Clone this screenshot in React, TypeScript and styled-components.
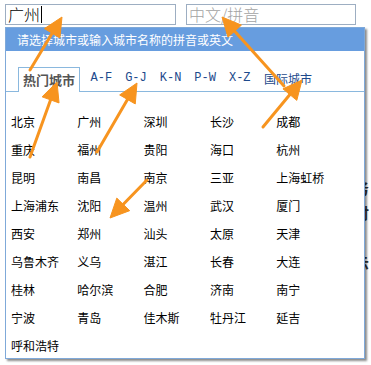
import React from 'react';
import styled, { createGlobalStyle } from 'styled-components';

const Global = createGlobalStyle`
  html, body { margin: 0; padding: 0; background: #fff; }
  body {
    font-family: "Noto Sans CJK SC", "Noto Sans", sans-serif;
    width: 371px;
    height: 365px;
    overflow: hidden;
  }
`;

const Page = styled.div`
  position: relative;
  width: 371px;
  height: 365px;
  overflow: hidden;
`;

const InputRow = styled.div`
  display: flex;
  gap: 10px;
  padding: 4px 0 0 5px;
`;

const Field = styled.div<{ $w: number }>`
  width: ${(p) => p.$w}px;
  height: 21px;
  box-sizing: border-box;
  border: 1px solid #9daec2;
  display: flex;
  align-items: center;
  padding-left: 2px;
  font-size: 16px;
  font-weight: 300;
  line-height: 19px;
  color: #000;
`;

const Placeholder = styled.span`
  color: #a3a3a3;
`;

const Caret = styled.span`
  display: inline-block;
  width: 1px;
  height: 17px;
  background: #000;
  margin-left: 1px;
`;

const BehindText = styled.div`
  display: flex;
  flex-direction: column;
  margin: 150px 0 0 354px;
  font-size: 15px;
  font-weight: bold;
  line-height: 25px;
  color: #333;
`;

const Panel = styled.div`
  position: absolute;
  left: 5px;
  top: 27px;
  width: 360px;
  height: 332px;
  box-sizing: border-box;
  border: 1px solid #7fa9d9;
  background: #fff;
  box-shadow: 2px 2px 2px rgba(0, 0, 0, 0.45);
`;

const Header = styled.div`
  height: 23px;
  line-height: 23px;
  background: #679ddf;
  color: #fff;
  font-size: 12px;
  padding-left: 11px;
`;

const TabBar = styled.div`
  display: flex;
  align-items: flex-end;
  margin-top: 16px;
  height: 24px;
  padding-left: 12px;
  border-bottom: 1px solid #8ab8de;
`;

const Tab = styled.div<{ $active?: boolean; $cjk?: boolean }>`
  height: 24px;
  line-height: 23px;
  box-sizing: border-box;
  white-space: nowrap;
  ${(p) =>
    p.$active
      ? `
    border: 1px solid #8ab8de;
    border-bottom: none;
    background: #fff;
    margin-bottom: -1px;
    height: 25px;
    padding: 0 4px;
    margin-right: 4px;
    font-size: 13px;
    font-weight: bold;
    color: #555;
  `
      : `
    padding: 0 ${p.$cjk ? 7 : 6.5}px;
    color: #1d4a8c;
    font-size: 12px;
    font-family: ${p.$cjk ? '"Noto Sans CJK SC", sans-serif' : '"Liberation Mono", monospace'};
  `}
`;

const CityGrid = styled.div`
  display: grid;
  grid-template-columns: repeat(5, 66.3px);
  grid-auto-rows: 28px;
  align-items: center;
  padding: 15px 0 0 5px;
  font-size: 12px;
  color: #000;
`;

const City = styled.div`
  white-space: nowrap;
`;

const Overlay = styled.svg`
  position: absolute;
  left: 0;
  top: 0;
  pointer-events: none;
  z-index: 5;
`;

const cities = [
  '北京', '广州', '深圳', '长沙', '成都',
  '重庆', '福州', '贵阳', '海口', '杭州',
  '昆明', '南昌', '南京', '三亚', '上海虹桥',
  '上海浦东', '沈阳', '温州', '武汉', '厦门',
  '西安', '郑州', '汕头', '太原', '天津',
  '乌鲁木齐', '义乌', '湛江', '长春', '大连',
  '桂林', '哈尔滨', '合肥', '济南', '南宁',
  '宁波', '青岛', '佳木斯', '牡丹江', '延吉',
  '呼和浩特',
];

const tabs = ['A-F', 'G-J', 'K-N', 'P-W', 'X-Z'];

type Pt = [number, number];

const Arrow: React.FC<{ from: Pt; to: Pt }> = ({ from, to }) => {
  const dx = to[0] - from[0];
  const dy = to[1] - from[1];
  const len = Math.hypot(dx, dy);
  const ux = dx / len;
  const uy = dy / len;
  const nx = -uy;
  const ny = ux;
  const headLen = 19;
  const headHalf = 9;
  const bx = to[0] - ux * headLen;
  const by = to[1] - uy * headLen;
  const pts = [
    [to[0], to[1]],
    [bx + nx * headHalf, by + ny * headHalf],
    [bx - nx * headHalf, by - ny * headHalf],
  ]
    .map((p) => p.join(','))
    .join(' ');
  return (
    <g>
      <line
        x1={from[0]}
        y1={from[1]}
        x2={bx + ux * 2}
        y2={by + uy * 2}
        stroke="#f7941f"
        strokeWidth={3}
        strokeLinecap="round"
      />
      <polygon points={pts} fill="#f7941f" stroke="#f7941f" strokeWidth={1} strokeLinejoin="round" />
    </g>
  );
};

const arrows: { from: Pt; to: Pt }[] = [
  { from: [30, 70], to: [62, 17] },
  { from: [30, 157], to: [57, 82] },
  { from: [97, 152], to: [137, 83] },
  { from: [263, 127], to: [302, 80] },
  { from: [284, 86], to: [222, 17] },
  { from: [147, 180], to: [110, 218] },
];

export default function App() {
  return (
    <Page>
      <Global />
      <InputRow>
        <Field $w={171}>
          广州
          <Caret />
        </Field>
        <Field $w={170}>
          <Placeholder>中文/拼音</Placeholder>
        </Field>
      </InputRow>
      <BehindText>
        <span>务</span>
        <span>对</span>
        <span>C</span>
        <span>示</span>
      </BehindText>
      <Panel>
        <Header>请选择城市或输入城市名称的拼音或英文</Header>
        <TabBar>
          <Tab $active>热门城市</Tab>
          {tabs.map((t) => (
            <Tab key={t}>{t}</Tab>
          ))}
          <Tab $cjk>国际城市</Tab>
        </TabBar>
        <CityGrid>
          {cities.map((c, i) => (
            <City key={i}>{c}</City>
          ))}
        </CityGrid>
      </Panel>
      <Overlay width={371} height={365} viewBox="0 0 371 365">
        {arrows.map((a, i) => (
          <Arrow key={i} from={a.from} to={a.to} />
        ))}
      </Overlay>
    </Page>
  );
}
